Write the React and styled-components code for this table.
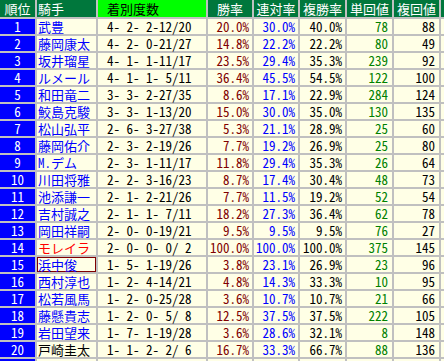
import styled, { createGlobalStyle } from 'styled-components'

const jockeys = [
	{ rank: 1, name: '武豊', record: '4- 2- 2-12/20', win: '20.0%', top2: '30.0%', top3: '40.0%', winRoi: 78, placeRoi: 88 },
	{ rank: 2, name: '藤岡康太', record: '4- 2- 0-21/27', win: '14.8%', top2: '22.2%', top3: '22.2%', winRoi: 80, placeRoi: 49 },
	{ rank: 3, name: '坂井瑠星', record: '4- 1- 1-11/17', win: '23.5%', top2: '29.4%', top3: '35.3%', winRoi: 239, placeRoi: 92 },
	{ rank: 4, name: 'ルメール', record: '4- 1- 1- 5/11', win: '36.4%', top2: '45.5%', top3: '54.5%', winRoi: 122, placeRoi: 100 },
	{ rank: 5, name: '和田竜二', record: '3- 3- 2-27/35', win: '8.6%', top2: '17.1%', top3: '22.9%', winRoi: 284, placeRoi: 124 },
	{ rank: 6, name: '鮫島克駿', record: '3- 3- 1-13/20', win: '15.0%', top2: '30.0%', top3: '35.0%', winRoi: 130, placeRoi: 135 },
	{ rank: 7, name: '松山弘平', record: '2- 6- 3-27/38', win: '5.3%', top2: '21.1%', top3: '28.9%', winRoi: 25, placeRoi: 60 },
	{ rank: 8, name: '藤岡佑介', record: '2- 3- 2-19/26', win: '7.7%', top2: '19.2%', top3: '26.9%', winRoi: 25, placeRoi: 80 },
	{ rank: 9, name: 'M．デム', record: '2- 3- 1-11/17', win: '11.8%', top2: '29.4%', top3: '35.3%', winRoi: 26, placeRoi: 64 },
	{ rank: 10, name: '川田将雅', record: '2- 2- 3-16/23', win: '8.7%', top2: '17.4%', top3: '30.4%', winRoi: 48, placeRoi: 73 },
	{ rank: 11, name: '池添謙一', record: '2- 1- 2-21/26', win: '7.7%', top2: '11.5%', top3: '19.2%', winRoi: 52, placeRoi: 54 },
	{ rank: 12, name: '吉村誠之', record: '2- 1- 1- 7/11', win: '18.2%', top2: '27.3%', top3: '36.4%', winRoi: 62, placeRoi: 78 },
	{ rank: 13, name: '岡田祥嗣', record: '2- 0- 0-19/21', win: '9.5%', top2: '9.5%', top3: '9.5%', winRoi: 76, placeRoi: 27 },
	{ rank: 14, name: 'モレイラ', record: '2- 0- 0- 0/ 2', win: '100.0%', top2: '100.0%', top3: '100.0%', winRoi: 375, placeRoi: 145, tone: 'red' },
	{ rank: 15, name: '浜中俊', record: '1- 5- 1-19/26', win: '3.8%', top2: '23.1%', top3: '26.9%', winRoi: 23, placeRoi: 96, marked: true },
	{ rank: 16, name: '西村淳也', record: '1- 2- 4-14/21', win: '4.8%', top2: '14.3%', top3: '33.3%', winRoi: 10, placeRoi: 95 },
	{ rank: 17, name: '松若風馬', record: '1- 2- 0-25/28', win: '3.6%', top2: '10.7%', top3: '10.7%', winRoi: 21, placeRoi: 66 },
	{ rank: 18, name: '藤懸貴志', record: '1- 2- 0- 5/ 8', win: '12.5%', top2: '37.5%', top3: '37.5%', winRoi: 222, placeRoi: 105 },
	{ rank: 19, name: '岩田望来', record: '1- 7- 1-19/28', win: '3.6%', top2: '28.6%', top3: '32.1%', winRoi: 8, placeRoi: 148 },
	{ rank: 20, name: '戸崎圭太', record: '1- 1- 2- 2/ 6', win: '16.7%', top2: '33.3%', top3: '66.7%', winRoi: 88, placeRoi: 136, tone: 'black' },
]

const tones = {
	blue: '#0000ff',
	red: '#ff0000',
	black: '#000000',
	maroon: '#800000',
	green: '#008000',
}

const App = () => {
	return (
		<>
			<GlobalStyle />
			<Sheet>
				<Row>
					<HeadCell>順位</HeadCell>
					<HeadCell $align='left' $indent={1}>騎手</HeadCell>
					<HeadCell $hot $align='left' $indent={9}>着別度数</HeadCell>
					<HeadCell>勝率</HeadCell>
					<HeadCell>連対率</HeadCell>
					<HeadCell>複勝率</HeadCell>
					<HeadCell>単回値</HeadCell>
					<HeadCell>複回値</HeadCell>
					<HeadCell />
				</Row>
				{jockeys.map(j => (
					<Row key={j.rank}>
						<RankCell>{j.rank}</RankCell>
						<NameCell $tone={j.tone || 'blue'} $marked={j.marked}>
							{j.name}
						</NameCell>
						<RecordCell>{j.record}</RecordCell>
						<RateCell $tone='maroon'>{j.win}</RateCell>
						<RateCell $tone='blue'>{j.top2}</RateCell>
						<RateCell $tone='black'>{j.top3}</RateCell>
						<RateCell $tone='green' $pad={4}>{j.winRoi}</RateCell>
						<RateCell $tone='black' $pad={4}>{j.placeRoi}</RateCell>
						<BodyCell />
					</Row>
				))}
				<Row>
					<RankCell />
					<BodyCell />
					<BodyCell />
					<BodyCell />
					<BodyCell />
					<BodyCell />
					<BodyCell />
					<BodyCell />
					<BodyCell />
				</Row>
			</Sheet>
		</>
	)
}
export default App

const GlobalStyle = createGlobalStyle`
	html, body {
		margin: 0;
		padding: 0;
		background: #ffffff;
	}
	body {
		font-family: "Noto Sans Mono CJK JP", "Noto Sans CJK JP", monospace;
		font-size: 13px;
	}
`

const Sheet = styled.div`
	display: grid;
	grid-template-columns: 35px 59px 108px 44px 44px 45px 45px 45px 3px;
	grid-template-rows: 17px;
	grid-auto-rows: 15px;
	gap: 2px;
	width: max-content;
	background: #c0c0c0;
`

const Row = styled.div`
	display: contents;
`

const Cell = styled.div`
	line-height: 15px;
	white-space: pre;
	font-feature-settings: "hwid" 1;
`

const HeadCell = styled(Cell)`
	line-height: 17px;
	background: ${p => (p.$hot ? '#00ff00' : '#00773c')};
	color: ${p => (p.$hot ? '#000000' : '#ffffff')};
	text-align: ${p => p.$align || 'center'};
	padding-left: ${p => p.$indent || 0}px;
`

const RankCell = styled(Cell)`
	background: #0000ff;
	color: #ffffff;
	text-align: center;
`

const BodyCell = styled(Cell)`
	background: #ffffe6;
`

const NameCell = styled(BodyCell)`
	color: ${p => tones[p.$tone]};
	padding-left: 1px;
	box-shadow: ${p => (p.$marked ? 'inset 0 0 0 1px #800000' : 'none')};
`

const RecordCell = styled(BodyCell)`
	color: #000000;
	padding-left: 9px;
`

const RateCell = styled(BodyCell)`
	color: ${p => tones[p.$tone] || '#000000'};
	text-align: right;
	padding-right: ${p => p.$pad || 3}px;
`
